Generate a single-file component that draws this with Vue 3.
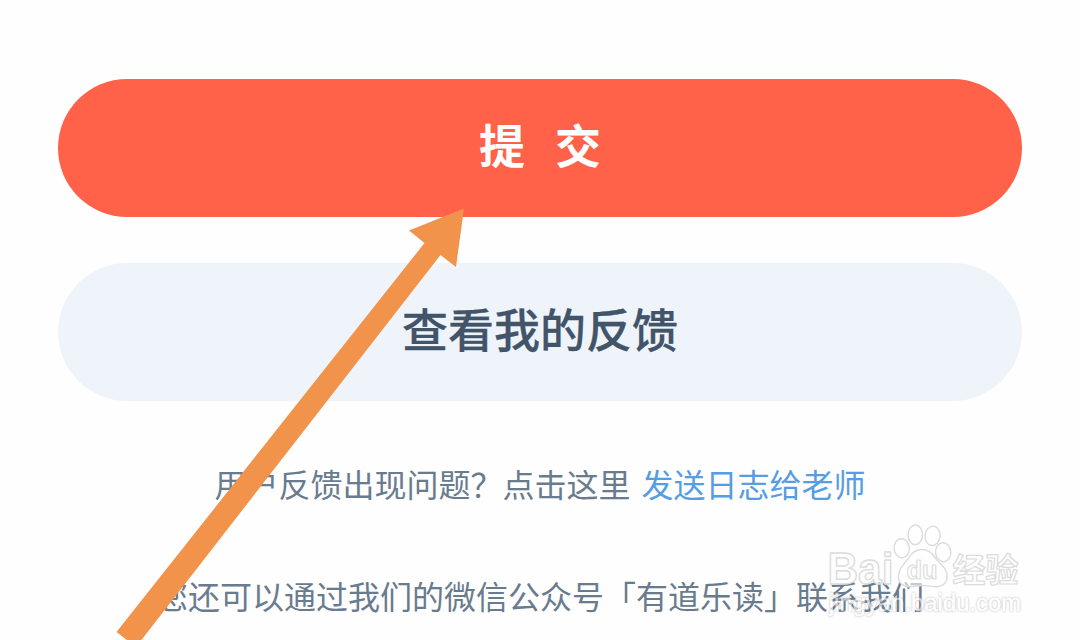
<template>
  <main class="page">
    <div class="actions">
      <button class="btn btn-primary" type="button">
        <span>提</span>
        <span>交</span>
      </button>
      <button class="btn btn-secondary" type="button">查看我的反馈</button>
    </div>

    <p class="hint">
      <span>用户反馈出现问题？点击这里</span>
      <a class="link">发送日志给老师</a>
    </p>
    <p class="contact">您还可以通过我们的微信公众号「有道乐读」联系我们</p>

    <svg class="arrow" width="1080" height="640" viewBox="0 0 1080 640">
      <polygon points="464,208.5 409,230.5 424.5,243 116.5,632 136,647 440.5,255 456,267" />
    </svg>

    <svg class="watermark" width="210" height="106" viewBox="820 516 210 106">
      <g class="logo">
        <ellipse cx="901.7" cy="548.3" rx="7.6" ry="9.6" transform="rotate(-6 901.7 548.3)" />
        <ellipse cx="915.3" cy="534.8" rx="7.2" ry="9.8" />
        <ellipse cx="932.6" cy="535.8" rx="7.5" ry="9.7" transform="rotate(6 932.6 535.8)" />
        <ellipse cx="943.2" cy="552.3" rx="7.6" ry="9.5" transform="rotate(-6 943.2 552.3)" />
        <path
          d="M922 549.5c-6 0-10 3-13 8-3 5-10 9-10.500 18-.5 7 4 11.500 11 11.200 5-.2 8-1.200 13-1.200s9 1.200 13 1.200c8 0 12-4.500 11.500-12-.5-8-9-12-12-17-3-5-7-8.200-13-8.200z"
        />
        <text class="latin" x="827.500" y="584" textLength="66" lengthAdjust="spacingAndGlyphs">Bai</text>
        <text class="du" x="906.500" y="579" textLength="31" lengthAdjust="spacingAndGlyphs">du</text>
        <text class="cjk" x="952.500" y="582">经验</text>
      </g>
      <text class="url" x="829" y="611" textLength="192" lengthAdjust="spacingAndGlyphs">jingyan.baidu.com</text>
    </svg>
  </main>
</template>

<script setup>
</script>

<style>
body {
  overflow: hidden;
  background: #fefefe;
}
</style>

<style scoped>
.page {
  position: relative;
  box-sizing: border-box;
  width: 1080px;
  height: 640px;
  padding: 79px 58px 0;
  overflow: hidden;
  font-family: 'Noto Sans CJK SC', sans-serif;
}

.actions {
  display: flex;
  flex-direction: column;
  gap: 46px;
}

.btn {
  display: flex;
  align-items: center;
  justify-content: center;
  height: 138px;
  padding: 0 0 10px;
  border: 0;
  border-radius: 69px;
  font-family: inherit;
  font-size: 46px;
  line-height: 1;
}

.btn-primary {
  gap: 30px;
  background: #ff6149;
  color: #fff;
  font-weight: 700;
}

.btn-secondary {
  background: #eff4fb;
  color: #415469;
  font-weight: 500;
  -webkit-text-stroke: .3px #415469;
}

.hint,
.contact {
  display: flex;
  justify-content: center;
  margin: 0;
  color: #697b8e;
  font-size: 32px;
  line-height: 48px;
  white-space: nowrap;
}

.hint {
  gap: 11px;
  margin-top: 58px;
}

.contact {
  margin-top: 64px;
}

.link {
  color: #569de4;
}

.arrow {
  position: absolute;
  top: 0;
  left: 0;
  fill: #f2934b;
}

.watermark {
  position: absolute;
  top: 516px;
  left: 820px;
}

.logo {
  fill: rgba(255, 255, 255, .6);
  stroke: #dcdcdc;
  stroke-width: 1.4;
  stroke-linejoin: round;
}

.latin,
.du,
.url {
  font-family: 'Liberation Sans', Arial, sans-serif;
}

.latin {
  font-size: 44px;
  font-weight: 700;
}

.du {
  font-size: 25px;
  font-weight: 700;
  stroke-width: 1.1;
}

.cjk {
  font-size: 33px;
  font-weight: 700;
  stroke-width: 1.2;
}

.url {
  font-size: 23px;
  fill: #fff;
  stroke: #fff;
  stroke-width: .4;
  opacity: .6;
  filter: drop-shadow(0 0 .9px #888);
}
</style>
